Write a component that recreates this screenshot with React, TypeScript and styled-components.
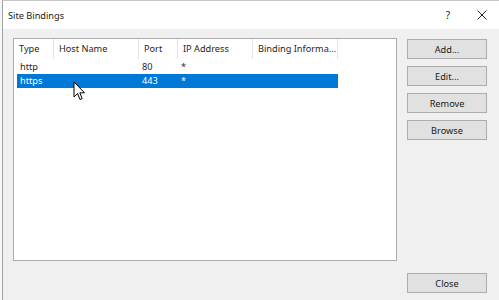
import React from "react";
import styled, { createGlobalStyle } from "styled-components";

const Global = createGlobalStyle`
  html, body { margin: 0; padding: 0; background: #f7f7f7; }
  body { font-family: "Noto Sans", "Open Sans", "Liberation Sans", sans-serif; }
`;

const Window = styled.div`
  position: relative;
  margin-left: 2px;
  width: 497px;
  height: 300px;
  box-sizing: border-box;
  border-left: 1px solid #a0a0a0;
  border-top: 1px solid #c8c8c8;
  background: #f0f0f0;
  display: flex;
  flex-direction: column;
  overflow: hidden;
`;

const TitleBar = styled.div`
  height: 28px;
  background: #ffffff;
  display: flex;
  align-items: center;
  padding-left: 5px;
  font-size: 9.2px;
  color: #1a1a1a;
`;

const Title = styled.span`
  flex: 1;
`;

const TitleButton = styled.div`
  width: 34px;
  height: 28px;
  display: flex;
  align-items: center;
  justify-content: center;
  font-size: 10px;
  color: #222;
`;

const Body = styled.div`
  flex: 1;
  display: grid;
  grid-template-columns: 384px 80px;
  grid-template-rows: 223px auto;
  column-gap: 10px;
  row-gap: 12px;
  padding: 9px 0 0 10px;
`;

const ListBox = styled.div`
  box-sizing: border-box;
  background: #ffffff;
  border: 1px solid #adadad;
  display: flex;
  flex-direction: column;
`;

const HeaderRow = styled.div`
  display: flex;
  height: 20px;
  margin-bottom: 1px;
`;

const HeaderCell = styled.div<{ $w: number }>`
  width: ${(p) => p.$w}px;
  box-sizing: border-box;
  border-right: 1px solid #e5e5e5;
  padding-left: 5px;
  font-size: 9.2px;
  line-height: 20px;
  color: #262626;
  white-space: nowrap;
`;

const Row = styled.div<{ $selected?: boolean }>`
  display: flex;
  height: 14px;
  margin-left: 3px;
  width: 321px;
  background: ${(p) => (p.$selected ? "#0078d7" : "transparent")};
  color: ${(p) => (p.$selected ? "#ffffff" : "#262626")};
`;

const Cell = styled.div<{ $w: number }>`
  width: ${(p) => p.$w}px;
  box-sizing: border-box;
  padding-left: 3px;
  font-size: 9.2px;
  line-height: 14px;
  white-space: nowrap;
`;

const Buttons = styled.div`
  display: flex;
  flex-direction: column;
  gap: 7px;
  padding-top: 1px;
`;

const Button = styled.div`
  height: 20px;
  box-sizing: border-box;
  background: #e1e1e1;
  border: 1px solid #adadad;
  display: flex;
  align-items: center;
  justify-content: center;
  font-size: 9.2px;
  color: #1a1a1a;
`;

const CloseButton = styled(Button)`
  grid-column: 2;
`;

const Cursor = styled.svg`
  position: absolute;
  left: 70px;
  top: 80px;
`;

const cols = [
  { label: "Type", w: 40 },
  { label: "Host Name", w: 85 },
  { label: "Port", w: 39 },
  { label: "IP Address", w: 75 },
  { label: "Binding Informa...", w: 85 },
];

const rows = [
  { type: "http", host: "", port: "80", ip: "*", info: "" },
  { type: "https", host: "", port: "443", ip: "*", info: "", selected: true },
];

export default function App() {
  return (
    <>
      <Global />
      <Window>
        <TitleBar>
          <Title>Site Bindings</Title>
          <TitleButton>?</TitleButton>
          <TitleButton>
            <svg width="10" height="10" viewBox="0 0 10 10">
              <path d="M0.5 0.5 L9.5 9.5 M9.5 0.5 L0.5 9.5" stroke="#222" strokeWidth="1" />
            </svg>
          </TitleButton>
        </TitleBar>
        <Body>
          <ListBox>
            <HeaderRow>
              {cols.map((c) => (
                <HeaderCell key={c.label} $w={c.w}>
                  {c.label}
                </HeaderCell>
              ))}
            </HeaderRow>
            {rows.map((r) => (
              <Row key={r.type} $selected={r.selected}>
                <Cell $w={37}>{r.type}</Cell>
                <Cell $w={85}>{r.host}</Cell>
                <Cell $w={39}>{r.port}</Cell>
                <Cell $w={75}>{r.ip}</Cell>
                <Cell $w={85}>{r.info}</Cell>
              </Row>
            ))}
          </ListBox>
          <Buttons>
            <Button>Add...</Button>
            <Button>Edit...</Button>
            <Button>Remove</Button>
            <Button>Browse</Button>
          </Buttons>
          <CloseButton>Close</CloseButton>
        </Body>
        <Cursor width="13" height="20" viewBox="0 0 13 20">
          <path
            d="M1 1 L1 16 L4.5 12.5 L7 18.5 L9.2 17.6 L6.8 11.8 L11.5 11.8 Z"
            fill="#ffffff"
            stroke="#000000"
            strokeWidth="1"
            strokeLinejoin="round"
          />
        </Cursor>
      </Window>
    </>
  );
}
